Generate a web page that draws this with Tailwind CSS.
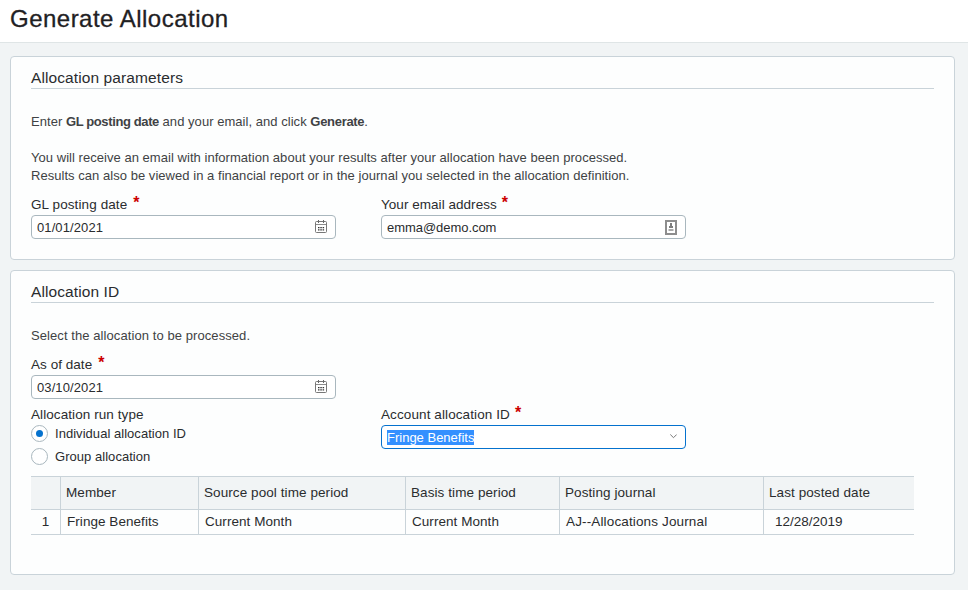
<!DOCTYPE html>
<html lang="en">
<head>
    <meta charset="UTF-8">
    <meta name="viewport" content="width=device-width, initial-scale=1.0">
    <title>Generate Allocation</title>
    <script src="https://cdn.jsdelivr.net/npm/@tailwindcss/browser@4"></script>
</head>
<body class="bg-[#f1f4f5] min-h-screen font-['Liberation_Sans',Arial,sans-serif] text-[13px] leading-[18px] tracking-[0.04px] text-[#2a2c2e]">
    <!-- Page title -->
    <header class="h-[43px] bg-white border-b border-[#dfe5e6] pl-[10px] pt-[3px]">
        <h1 class="text-[24px] leading-8 tracking-[0.48px] text-[#1f2123] [-webkit-text-stroke:0.3px]">Generate Allocation</h1>
    </header>

    <main class="pl-[10px] pr-[13px] pt-[13px] flex flex-col gap-[10px]">
        <!-- Allocation parameters -->
        <section class="h-[204px] bg-[#fdfefe] border border-[#c9d3d9] rounded px-5 pt-[11px]">
            <h2 class="text-[15.5px] leading-[19px] tracking-[0.1px] pb-px border-b border-[#c9d3d9]">Allocation parameters</h2>
            <p class="mt-6 text-[#404244]">Enter <b class="tracking-[-0.38px]">GL posting date</b> and your email, and click <b class="tracking-[-0.3px]">Generate</b>.</p>
            <p class="mt-[18px] text-[#404244]">
                You will receive an email with information about your results after your allocation have been processed.<br>
                Results can also be viewed in a financial report or in the journal you selected in the allocation definition.
            </p>
            <div class="mt-[11px] flex gap-[45px]">
                <div class="w-[305px]">
                    <label for="gl-date" class="flex h-[19px] text-[13.5px] tracking-[0.1px]">GL posting date<span class="ml-[6px] -mt-0.5 text-[16px] font-bold text-[#c00]">*</span></label>
                    <div class="h-6 flex items-center border border-[#a9b7be] rounded bg-white pl-[5px] pr-2">
                        <input id="gl-date" type="text" value="01/01/2021" class="flex-1 min-w-0 pt-0.5 tracking-[0.1px] outline-none">
                        <svg class="w-3 h-[14px]" viewBox="0 0 12 14" fill="none">
                            <rect x="0.5" y="1.5" width="11" height="11" rx="1" stroke="#777"/>
                            <path d="M1 4.5h10" stroke="#8c8c8c"/>
                            <path d="M3.5 0v3M8.5 0v3" stroke="#6b6b6b"/>
                            <path d="M3 7h1.5v1.2H3zM5.3 7h1.5v1.2H5.3zM7.6 7h1.5v1.2H7.6zM3 9.2h1.5v1.2H3zM5.3 9.2h1.5v1.2H5.3zM7.6 9.2h1.5v1.2H7.6z" fill="#333"/>
                        </svg>
                    </div>
                </div>
                <div class="w-[305px]">
                    <label for="email" class="flex h-[19px] text-[13.5px]">Your email address<span class="ml-[5px] -mt-0.5 text-[16px] font-bold text-[#c00]">*</span></label>
                    <div class="h-6 flex items-center border border-[#a9b7be] rounded bg-white pl-[5px] pr-2">
                        <input id="email" type="text" value="emma@demo.com" class="flex-1 min-w-0 pt-0.5 tracking-[-0.05px] outline-none">
                        <svg class="w-3 h-[15px]" viewBox="0 0 12 15" fill="none">
                            <rect x="1" y="1" width="10" height="13" stroke="#8d8d8d" stroke-width="2"/>
                            <path d="M5 3h2v3h1v2H4V6h1z" fill="#7d7d7d"/>
                            <path d="M3.5 9h5v2h-5z" fill="#a8a8a8"/>
                        </svg>
                    </div>
                </div>
            </div>
        </section>

        <!-- Allocation ID -->
        <section class="h-[305px] bg-[#fdfefe] border border-[#c9d3d9] rounded px-5 pt-[11px]">
            <h2 class="text-[15.5px] leading-[19px] tracking-[0.1px] pb-px border-b border-[#c9d3d9]">Allocation ID</h2>
            <p class="mt-6 tracking-[0.08px] text-[#404244]">Select the allocation to be processed.</p>
            <div class="mt-[11px] w-[305px]">
                <label for="as-of-date" class="flex h-[19px] text-[13.5px]">As of date<span class="ml-[6px] -mt-0.5 text-[16px] font-bold text-[#c00]">*</span></label>
                <div class="h-6 flex items-center border border-[#a9b7be] rounded bg-white pl-[5px] pr-2">
                    <input id="as-of-date" type="text" value="03/10/2021" class="flex-1 min-w-0 pt-0.5 tracking-[0.1px] outline-none">
                    <svg class="w-3 h-[14px]" viewBox="0 0 12 14" fill="none">
                        <rect x="0.5" y="1.5" width="11" height="11" rx="1" stroke="#777"/>
                        <path d="M1 4.5h10" stroke="#8c8c8c"/>
                        <path d="M3.5 0v3M8.5 0v3" stroke="#6b6b6b"/>
                        <path d="M3 7h1.5v1.2H3zM5.3 7h1.5v1.2H5.3zM7.6 7h1.5v1.2H7.6zM3 9.2h1.5v1.2H3zM5.3 9.2h1.5v1.2H5.3zM7.6 9.2h1.5v1.2H7.6z" fill="#333"/>
                    </svg>
                </div>
            </div>
            <div class="mt-[7px] flex gap-[45px]">
                <div class="w-[305px]">
                    <div class="h-[19px] text-[13.5px] tracking-[0.08px]">Allocation run type</div>
                    <div class="flex items-center gap-[7px] h-[17px]">
                        <span class="w-[17px] h-[17px] flex items-center justify-center rounded-full border border-[#a9b7be] bg-white">
                            <span class="w-[7px] h-[7px] rounded-full bg-[#0572ce]"></span>
                        </span>
                        Individual allocation ID
                    </div>
                    <div class="mt-[6px] flex items-center gap-[7px] h-[17px]">
                        <span class="w-[17px] h-[17px] rounded-full border border-[#a9b7be] bg-white"></span>
                        Group allocation
                    </div>
                </div>
                <div class="w-[305px]">
                    <div class="flex h-[19px] text-[13.5px] tracking-[0.1px]">Account allocation ID<span class="ml-[5px] -mt-0.5 text-[16px] font-bold text-[#c00]">*</span></div>
                    <div class="h-6 flex items-center justify-between border border-[#0572ce] rounded bg-white pl-[5px] pr-2">
                        <span class="bg-[#3390ff] text-white leading-[15px] tracking-normal">Fringe Benefits</span>
                        <svg class="w-[7px] h-[5px] -mt-0.5" viewBox="0 0 7 5" fill="none">
                            <path d="M0.3 0.5l3.2 3.2 3.2-3.2" stroke="#777"/>
                        </svg>
                    </div>
                </div>
            </div>

            <!-- Members table -->
            <div class="mt-[11px] w-[883px] border-b border-[#c9d3d9] text-[13.5px]">
                <div class="grid grid-cols-[29px_138px_207px_154px_204px_151px] h-[34px] leading-[32px] tracking-[0.08px] bg-[#f1f4f5] border-y border-[#c9d3d9]">
                    <div></div>
                    <div class="border-l border-[#c9d3d9] pl-[5px]">Member</div>
                    <div class="border-l border-[#c9d3d9] pl-[5px]">Source pool time period</div>
                    <div class="border-l border-[#c9d3d9] pl-[5px]">Basis time period</div>
                    <div class="border-l border-[#c9d3d9] pl-[5px]">Posting journal</div>
                    <div class="border-l border-[#c9d3d9] pl-[5px]">Last posted date</div>
                </div>
                <div class="grid grid-cols-[29px_138px_207px_154px_204px_151px] h-6 leading-6 tracking-[0.05px]">
                    <div class="text-center">1</div>
                    <div class="border-l border-[#c9d3d9] pl-[6px]">Fringe Benefits</div>
                    <div class="border-l border-[#c9d3d9] pl-[6px]">Current Month</div>
                    <div class="border-l border-[#c9d3d9] pl-[6px]">Current Month</div>
                    <div class="border-l border-[#c9d3d9] pl-[6px] tracking-[0.14px]">AJ--Allocations Journal</div>
                    <div class="border-l border-[#c9d3d9] pl-[11px] tracking-[-0.02px]">12/28/2019</div>
                </div>
            </div>
        </section>
    </main>
</body>
</html>
